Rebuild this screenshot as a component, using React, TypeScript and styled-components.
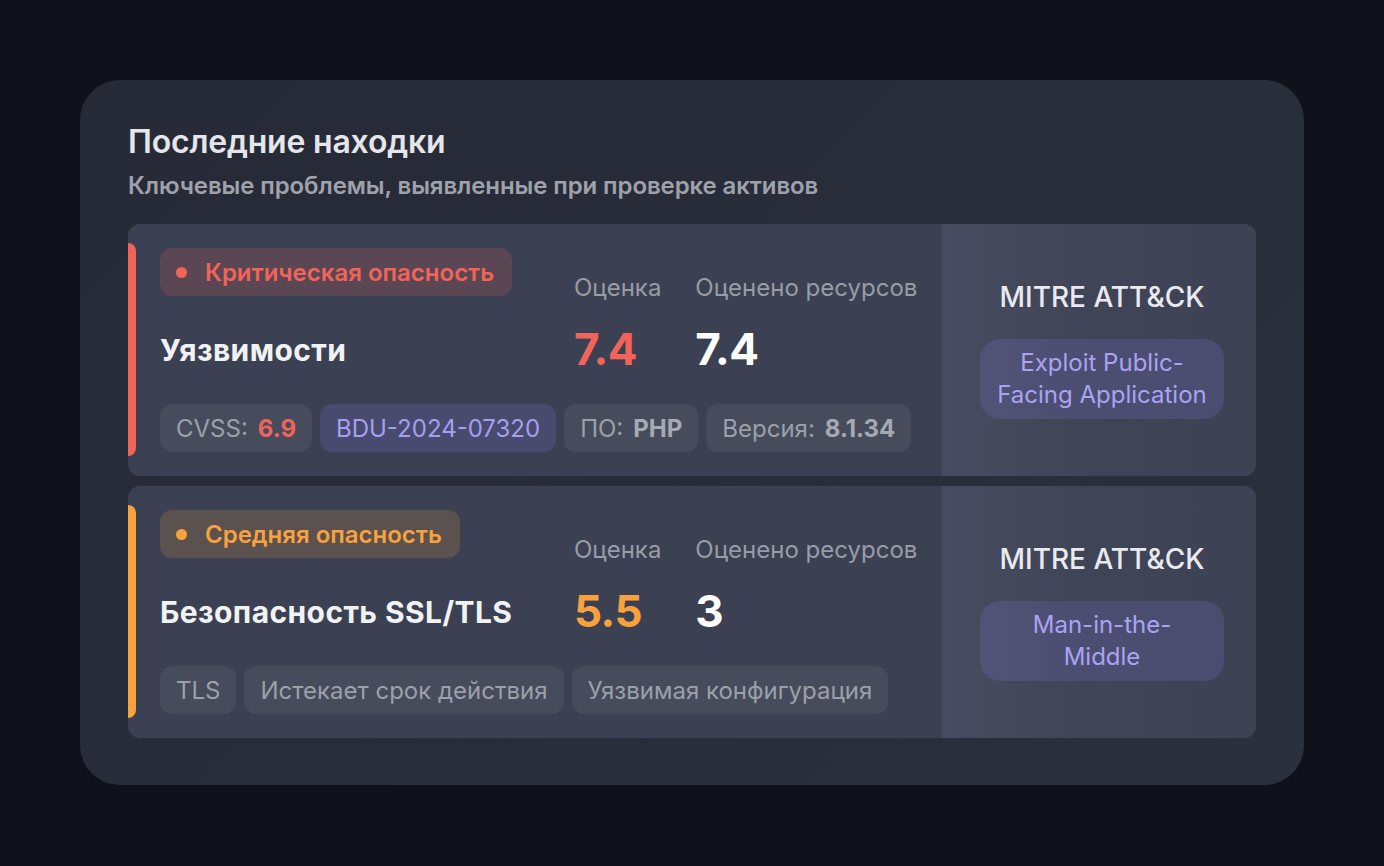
import React from 'react'
import styled, { createGlobalStyle } from 'styled-components'

const GlobalStyle = createGlobalStyle`
  * { box-sizing: border-box; }
  html, body {
    margin: 0;
    padding: 0;
    background: #0f121a;
    font-family: Inter, "Noto Sans", sans-serif;
  }
`

type Severity = 'critical' | 'medium'

const tone: Record<Severity, { text: string; bg: string }> = {
  critical: { text: '#f2645a', bg: 'rgba(242, 100, 90, 0.17)' },
  medium: { text: '#f7a23d', bg: 'rgba(247, 162, 61, 0.17)' },
}

const Page = styled.div`
  padding: 80px;
  min-height: 866px;
`

const Panel = styled.section`
  width: 1224px;
  border-radius: 40px;
  background: linear-gradient(135deg, #262a36 0%, #2b303e 100%);
  padding: 43px 48px 47px;
`

const Heading = styled.h2`
  margin: 0;
  font-size: 32px;
  line-height: 38px;
  font-weight: 600;
  color: #e4e6ea;
  letter-spacing: -0.2px;
`

const Subheading = styled.p`
  margin: 11px 0 24px;
  font-size: 24px;
  line-height: 28px;
  font-weight: 600;
  color: #9ea2ab;
  letter-spacing: -0.1px;
`

const List = styled.div`
  display: flex;
  flex-direction: column;
  gap: 10px;
`

const Row = styled.article`
  display: flex;
  height: 252px;
  border-radius: 12px;
  background: #3b4152;
  overflow: hidden;
`

const AccentBar = styled.div<{ $severity: Severity }>`
  flex: 0 0 8px;
  margin: 19px 0 20px;
  border-radius: 0 8px 8px 0;
  background: ${({ $severity }) => tone[$severity].text};
`

const Main = styled.div`
  flex: 1;
  padding: 24px 0 24px 24px;
  display: flex;
  flex-direction: column;
`

const Top = styled.div`
  display: flex;
  align-items: flex-start;
`

const Info = styled.div`
  width: 414px;
  display: flex;
  flex-direction: column;
  align-items: flex-start;
  gap: 34px;
`

const Badge = styled.div<{ $severity: Severity }>`
  display: inline-flex;
  align-items: center;
  gap: 18px;
  height: 48px;
  padding: 0 18px 0 16px;
  border-radius: 12px;
  background: ${({ $severity }) => tone[$severity].bg};
  color: ${({ $severity }) => tone[$severity].text};
  font-size: 24px;
  font-weight: 600;
`

const Dot = styled.span`
  width: 11px;
  height: 11px;
  border-radius: 50%;
  background: currentColor;
`

const Title = styled.h3`
  margin: 0;
  font-size: 30px;
  line-height: 40px;
  font-weight: 700;
  color: #f1f2f4;
  letter-spacing: 0.4px;
`

const Metrics = styled.div`
  display: flex;
  gap: 34px;
  padding-top: 26px;
`

const Metric = styled.div`
  display: flex;
  flex-direction: column;
  gap: 21px;
`

const MetricLabel = styled.span`
  font-size: 24px;
  line-height: 28px;
  color: #989ca7;
`

const MetricValue = styled.span<{ $color: string }>`
  font-size: 44px;
  line-height: 52px;
  font-weight: 700;
  letter-spacing: -0.5px;
  color: ${({ $color }) => $color};
`

const Tags = styled.div`
  display: flex;
  gap: 8px;
  margin-top: 29px;
`

const Tag = styled.span<{ $accent?: boolean }>`
  display: inline-flex;
  align-items: center;
  gap: 10px;
  height: 48px;
  padding: 0 16px;
  border-radius: 12px;
  font-size: 24px;
  white-space: nowrap;
  background: ${({ $accent }) => ($accent ? 'rgba(140, 128, 255, 0.16)' : 'rgba(255, 255, 255, 0.06)')};
  color: ${({ $accent }) => ($accent ? '#a59ff0' : '#9ba0aa')};
`

const TagValue = styled.b<{ $color?: string }>`
  font-weight: 700;
  color: ${({ $color }) => $color || '#a6aab3'};
`

const Mitre = styled.aside`
  flex: 0 0 314px;
  display: flex;
  flex-direction: column;
  align-items: center;
  justify-content: center;
  gap: 26px;
  padding: 0 29px 0 35px;
  background: linear-gradient(90deg, #474c60 0%, #3f4456 45%, #3d4354 100%);
`

const MitreTitle = styled.div`
  font-size: 28px;
  line-height: 32px;
  font-weight: 500;
  color: #e9eaef;
`

const Technique = styled.div`
  width: 244px;
  min-height: 80px;
  display: flex;
  align-items: center;
  justify-content: center;
  padding: 8px 10px;
  border-radius: 20px;
  background: rgba(140, 128, 255, 0.16);
  color: #aaa3f2;
  font-size: 24px;
  line-height: 32px;
  text-align: center;
`

interface Tagged {
  label: string
  value?: string
  valueColor?: string
  accent?: boolean
}

interface Finding {
  severity: Severity
  severityLabel: string
  title: string
  score: string
  assets: string
  tags: Tagged[]
  technique: React.ReactNode
}

const findings: Finding[] = [
  {
    severity: 'critical',
    severityLabel: 'Критическая опасность',
    title: 'Уязвимости',
    score: '7.4',
    assets: '7.4',
    tags: [
      { label: 'CVSS:', value: '6.9', valueColor: '#f2645a' },
      { label: 'BDU-2024-07320', accent: true },
      { label: 'ПО:', value: 'PHP' },
      { label: 'Версия:', value: '8.1.34' },
    ],
    technique: (
      <>
        Exploit Public-
        <br />
        Facing Application
      </>
    ),
  },
  {
    severity: 'medium',
    severityLabel: 'Средняя опасность',
    title: 'Безопасность SSL/TLS',
    score: '5.5',
    assets: '3',
    tags: [
      { label: 'TLS' },
      { label: 'Истекает срок действия' },
      { label: 'Уязвимая конфигурация' },
    ],
    technique: (
      <>
        Man-in-the-
        <br />
        Middle
      </>
    ),
  },
]

const FindingRow: React.FC<{ item: Finding }> = ({ item }) => (
  <Row>
    <AccentBar $severity={item.severity} />
    <Main>
      <Top>
        <Info>
          <Badge $severity={item.severity}>
            <Dot />
            {item.severityLabel}
          </Badge>
          <Title>{item.title}</Title>
        </Info>
        <Metrics>
          <Metric>
            <MetricLabel>Оценка</MetricLabel>
            <MetricValue $color={tone[item.severity].text}>{item.score}</MetricValue>
          </Metric>
          <Metric>
            <MetricLabel>Оценено ресурсов</MetricLabel>
            <MetricValue $color="#ffffff">{item.assets}</MetricValue>
          </Metric>
        </Metrics>
      </Top>
      <Tags>
        {item.tags.map(tag => (
          <Tag key={tag.label} $accent={tag.accent}>
            {tag.label}
            {tag.value && <TagValue $color={tag.valueColor}>{tag.value}</TagValue>}
          </Tag>
        ))}
      </Tags>
    </Main>
    <Mitre>
      <MitreTitle>MITRE ATT&amp;CK</MitreTitle>
      <Technique>
        <span>{item.technique}</span>
      </Technique>
    </Mitre>
  </Row>
)

const App: React.FC = () => (
  <Page>
    <GlobalStyle />
    <Panel>
      <Heading>Последние находки</Heading>
      <Subheading>Ключевые проблемы, выявленные при проверке активов</Subheading>
      <List>
        {findings.map(item => (
          <FindingRow key={item.title} item={item} />
        ))}
      </List>
    </Panel>
  </Page>
)

export default App
